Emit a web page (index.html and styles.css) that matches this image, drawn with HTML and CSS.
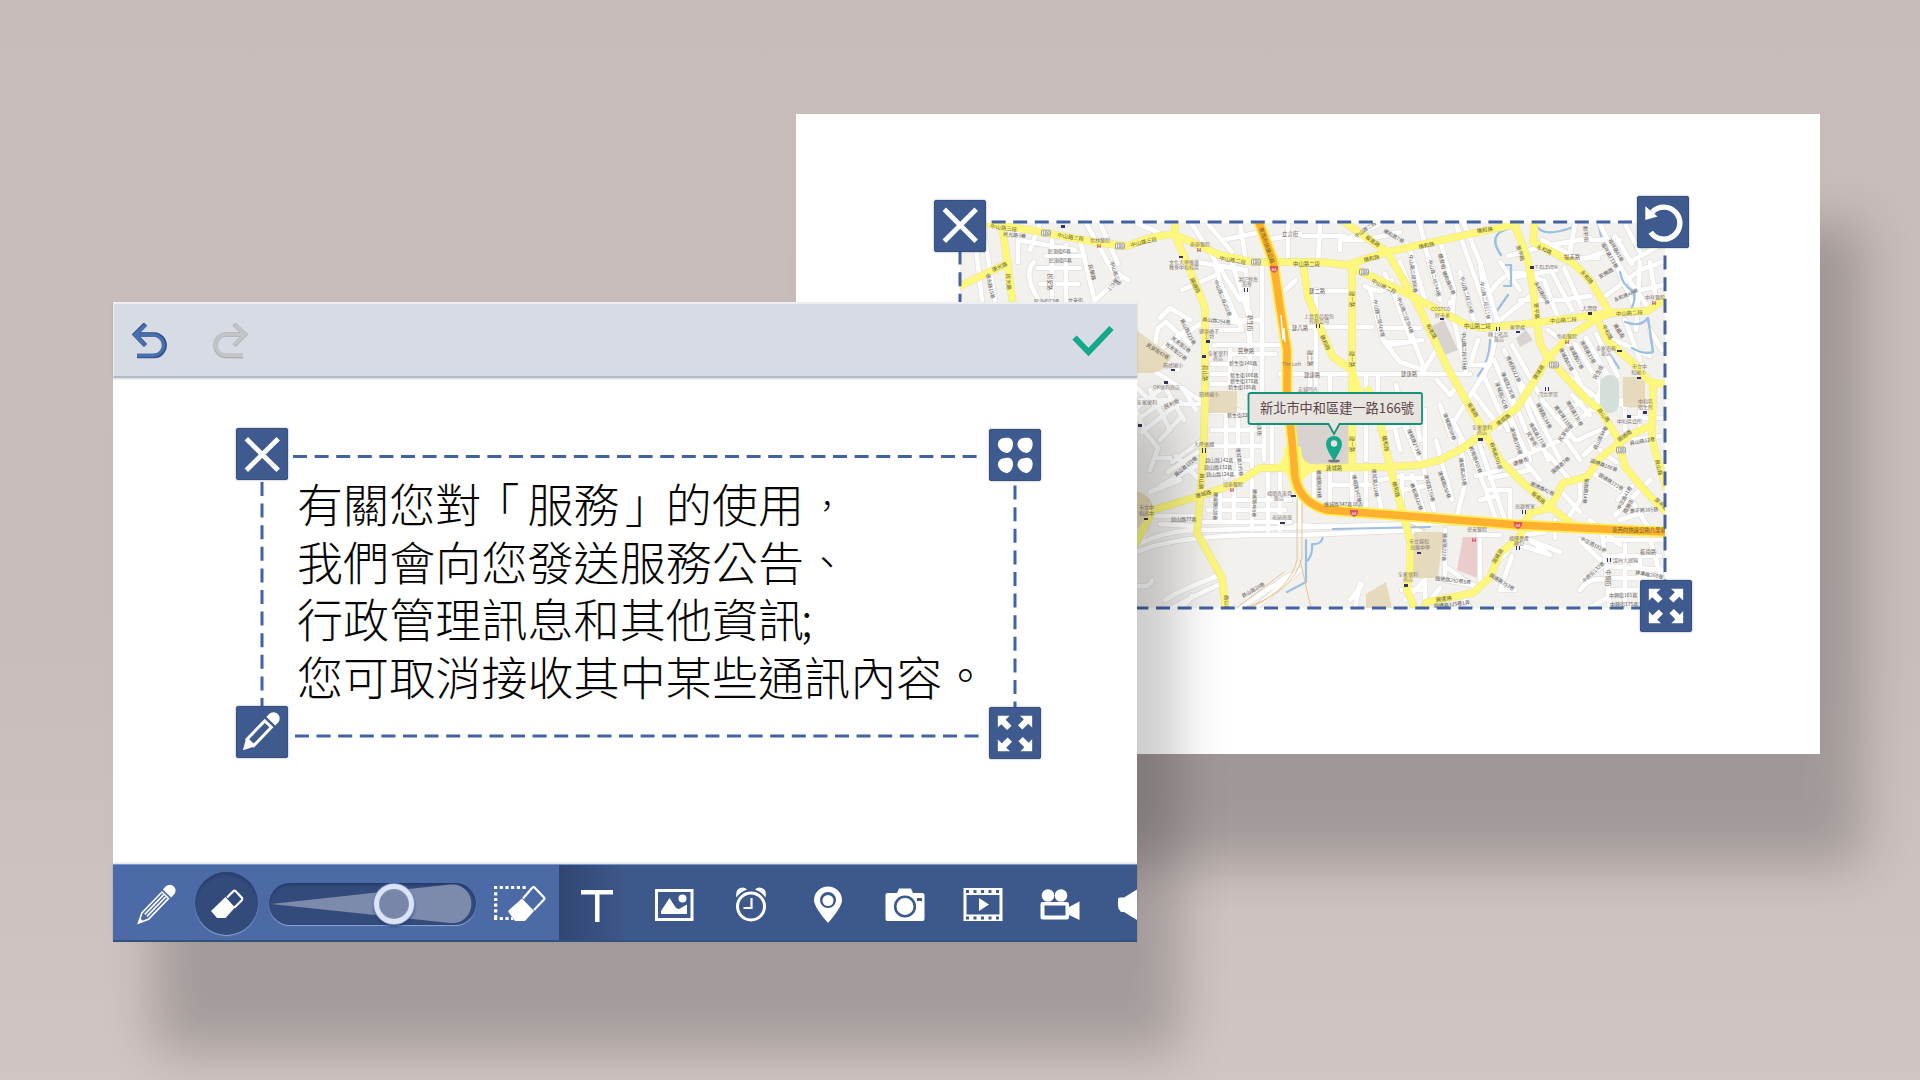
FILE: index.html
```html
<!DOCTYPE html>
<html lang="zh-Hant">
<head>
<meta charset="utf-8">
<title>編輯畫布</title>
<link rel="stylesheet" href="styles.css">
</head>
<body>
<main class="stage">
  <section class="card card-map">
    <svg class="map" viewBox="960 223 705 385" width="705" height="385">
      <defs>
        <g id="streets">
          <path d="M968 223L975 240L982 300M985 240L995 300M1018 226V262M1030 250L1040 223M1034 262Q1022 275 1040 302M1052 240V300M1066 245V300M1080 240L1095 302M1038 268H1080M1040 284H1078M1086 223L1112 270L1128 280M1100 223L1118 264M1095 300L1120 278M1018 240L1075 250M1046 256H1085"/>
          <path d="M1138 224L1158 232M1192 224L1216 262L1240 300M1208 224L1232 252M1240 223L1246 262M1222 240L1262 232M1196 262L1246 270L1250 360M1182 290L1214 276M1190 320L1170 308L1160 318M1176 340L1206 320M1160 350L1186 330M1155 344L1158 328L1166 322L1190 344M1146 366L1200 400M1143 344L1178 370"/>
          <path d="M1216 268L1232 320M1224 290L1242 330M1214 322H1250M1214 345H1280M1218 354H1275M1212 364H1240M1212 374H1240M1212 384H1240M1230 350V400M1250 312V398M1262 262V400M1232 262L1250 320M1240 320H1262M1206 330H1240"/>
          <path d="M1137 420L1165 400M1137 408L1162 388M1142 432L1180 402M1160 440L1182 416M1140 400H1170M1150 390L1170 430M1163 384L1184 420M1137 388L1160 410M1183 388L1196 410M1160 404H1200"/>
          <path d="M1137 412L1145 432L1158 448L1150 470M1158 458H1170M1172 462L1200 442M1168 472L1198 452M1160 486L1196 466M1150 492L1180 480M1176 456L1198 478M1212 412H1258M1212 430H1256M1212 446H1262M1212 460H1250M1212 473H1250M1226 404V478M1238 410V482M1252 404V466M1264 394V460M1272 400V470"/>
          <path d="M1212 500H1290M1208 510H1285M1204 522H1290M1220 490V522M1234 488V522M1252 480V530M1268 474V530M1280 470V530M1155 516H1200M1160 524L1195 526M1148 520L1142 540"/>
          <path d="M1137 545Q1170 528 1210 530L1480 522M1137 552Q1180 533 1300 535L1420 530M1137 586Q1150 588 1152 580M1165 600Q1180 590 1220 575M1172 608Q1190 598 1218 585M1182 608L1192 596M1240 608L1290 575M1255 608L1300 570"/>
          <path d="M1288 224V262M1303 236H1345M1265 240L1300 234M1320 224L1318 262M1340 250V240H1365L1400 232M1345 240L1380 224M1318 291H1350M1285 327H1372M1285 290L1296 280M1316 290V395M1280 374H1470M1330 374V400M1366 374V460M1378 374V395"/>
          <path d="M1365 286Q1385 298 1392 280M1370 290L1383 340L1400 362L1424 370L1436 350M1385 274L1410 330L1424 368M1396 300L1412 342H1384M1400 262L1418 310M1408 244L1425 300M1428 258L1440 300M1420 224L1426 250L1440 290M1440 240L1454 290L1452 320M1456 224L1490 320M1464 224L1480 262L1488 322M1384 328H1420M1390 345L1422 340"/>
          <path d="M1460 272L1474 320M1480 262L1500 330M1450 302L1462 356L1466 370M1495 330Q1495 360 1480 380L1455 420M1478 340L1470 365H1490M1504 350L1530 400M1512 345L1540 395M1494 360L1516 412M1484 376L1508 430M1475 395L1500 428M1464 400L1488 440M1452 420L1474 460"/>
          <path d="M1492 290Q1510 262 1540 280M1500 262L1520 290M1508 256L1545 246L1590 238M1520 300H1560M1510 278L1556 270M1500 320L1530 296M1544 280L1558 318M1552 272L1572 310M1564 268L1582 308M1542 240L1580 260L1610 250M1568 262L1575 224M1580 240H1620M1600 224L1622 270L1650 310M1560 258H1598M1548 330L1575 350M1560 300L1590 296"/>
          <path d="M1615 236L1632 264M1626 226L1640 252M1630 262L1660 245M1600 300L1640 270L1662 262M1618 270L1636 310M1640 262L1636 330M1625 320L1640 360M1614 340L1650 356M1650 330L1662 350M1640 290L1664 285M1656 300L1650 262"/>
          <path d="M1565 352L1586 396M1575 344L1602 388M1586 338L1610 380M1596 334L1618 376M1560 370L1600 400L1560 440M1606 372L1594 410M1572 395L1590 415M1620 400L1652 408M1625 382V430M1640 380V430M1610 405H1652M1628 418H1664"/>
          <path d="M1440 405L1452 440M1425 410V460M1412 395L1420 440M1404 425L1420 462M1436 440L1452 500M1424 470L1434 510M1412 475L1424 512M1402 475V515M1404 478H1426M1460 440L1466 480L1456 520M1470 450L1486 490L1496 520M1478 440L1505 520M1402 490L1425 486M1437 380L1450 395L1458 385"/>
          <path d="M1496 382L1520 440M1506 382L1534 450M1518 382L1548 460M1530 400L1560 460M1542 400L1575 440M1510 420L1530 460M1500 466L1570 436M1520 456L1540 480M1548 454L1570 480M1556 418L1590 396M1490 478L1530 470M1488 490H1510V525M1476 476L1500 470M1480 500L1496 496M1580 460L1566 440"/>
          <path d="M1578 440L1600 430M1584 455L1610 430M1588 470L1620 490M1600 450L1616 462M1580 480V500L1570 515M1560 490L1580 512M1630 440L1660 436M1618 500L1632 486M1615 515L1650 480M1620 520L1665 505M1625 490L1650 530M1602 530L1610 608M1580 540L1600 560M1590 520L1620 545"/>
          <path d="M1445 530V580L1474 585M1448 568L1478 590M1480 540V580M1478 535H1500M1440 588L1430 600M1402 590H1425M1405 600L1425 580V608M1465 600L1470 608M1512 556L1500 590L1515 590M1520 545L1550 555L1530 540L1560 552M1525 535L1545 532M1500 560L1516 540M1555 538V520M1360 583L1355 608M1350 600L1362 585"/>
          <path d="M1606 540H1665M1606 556H1660M1606 566L1665 570M1606 578H1660M1582 580L1602 566M1580 590Q1590 576 1606 580M1590 608L1620 590M1610 590H1664M1625 545V600M1640 556V600M1650 540L1665 590M1620 555L1660 580"/>
          <path d="M1300 480V522M1314 470V500M1330 472V505M1352 472V512M1366 470V510M1374 472L1382 512M1380 480L1400 476M1330 485H1370M1296 525L1420 532M1310 380V393M1388 400L1400 450M1396 385L1408 430M1365 400H1380M1380 430L1400 425"/>
        </g>
        <g id="arterials">
          <path d="M985 223L1030 230L1100 243L1127 246L1153 237L1173 234L1187 240L1220 255L1253 262L1320 262L1347 265L1387 252L1433 242L1516 224"/>
          <path d="M1347 265L1400 290L1467 325L1483 328L1533 323L1610 313L1647 311L1667 298"/>
          <path d="M1343 221L1387 252L1417 303L1447 367L1483 430L1500 460L1523 483L1550 507L1572 524"/>
          <path d="M1352 265V467"/>
          <path d="M1303 263L1308 297L1325 340L1333 357L1352 370M1368 390L1377 407L1390 467L1403 513L1410 540V567L1407 590L1415 610"/>
          <path d="M1175 221V235L1190 270L1205 308V400L1203 460L1197 533L1222 578L1226 610"/>
          <path d="M1135 545L1153 510L1203 495L1237 483L1260 468H1290L1387 467L1420 465L1440 460L1463 448L1490 428L1517 408L1535 380L1547 360L1567 338L1597 318L1612 313"/>
          <path d="M1513 221L1527 257L1533 287L1537 323L1540 343L1548 358L1587 400L1600 410L1617 437L1625 467L1647 493L1667 513"/>
          <path d="M1535 221L1533 242L1573 263L1590 280L1610 313M1597 318L1607 340L1633 363L1650 382L1667 385M1653 383L1652 440L1666 487"/>
          <path d="M1652 425L1630 435L1600 458L1587 477L1563 483L1550 508L1530 513L1523 527L1520 537L1500 553L1490 577L1473 593L1427 602L1423 610"/>
          <path d="M958 287L1008 263M1002 225L1008 267L1013 305"/>
        </g>
        <path id="highway" d="M1258 220L1273 260L1280 307L1287 350V393L1292 440L1295 477Q1300 503 1327 510L1420 517L1517 525L1667 532"/>
      </defs>
      <rect x="960" y="223" width="705" height="385" fill="#f2f1ee"/>
      <path fill="#d9d3cf" d="M1296 420H1349V465H1308Q1296 460 1296 447ZM1432 326L1444 320L1458 350L1442 356ZM1516 338L1526 330L1533 340L1520 347Z"/>
      <g class="water"><path d="M1510 228Q1486 234 1501 255M1506 265H1511V286H1504M1508 295L1494 315M1535 223Q1540 236 1560 231T1573 224M1598 223L1602 240M1620 272Q1622 285 1634 292Q1636 300 1630 312M1625 322Q1640 328 1648 318L1653 352Q1644 355 1632 348M1611 356L1619 368M1323 536Q1322 545 1312 544Q1313 556 1306 562M1306 540V582L1287 592M1490 340Q1490 360 1478 376"/></g>
      <use href="#streets" class="street-edge"/>
      <use href="#streets" class="street"/>
      <g class="water"><path d="M1510 228Q1486 234 1501 255M1506 265H1511V286M1620 272Q1622 285 1634 292Q1636 300 1630 312M1625 322Q1640 328 1648 318L1653 352Q1644 355 1632 348M1333 529L1430 527"/></g>
      <g fill="#e5dabb">
        <path d="M1136 330L1172 356Q1164 372 1152 373H1136Z"/>
        <path d="M1210 391H1237V413H1208ZM1136 491Q1150 494 1153 507L1145 520L1136 530ZM1414 532H1443L1438 578H1412ZM1623 377H1645V407H1623ZM1366 594L1386 582L1392 608H1366Z"/>
      </g>
      <path fill="#ebcccc" d="M1463 537H1477V578L1457 570Z"/>
      <rect x="1600" y="375" width="19" height="38" rx="9" fill="#d3dfd9"/>
      <g class="ramp"><path d="M1297 500V560Q1290 590 1250 608M1302 500V558Q1294 592 1240 610M1300 560L1311 608M1284 572L1234 610M1400 520L1425 530"/></g>
      <use href="#arterials" class="arterial-edge"/>
      <path d="M1275 468Q1288 466 1287 450M1312 468Q1297 464 1298 450M1285 468Q1294 476 1294 488M1314 468Q1300 472 1298 486M1352 370L1360 393" class="arterial"/>
      <use href="#arterials" class="arterial"/>
      <use href="#highway" class="highway-edge"/>
      <use href="#highway" class="highway"/>
      <path d="M1281 315L1283 340L1284 328L1285 342" fill="none" stroke="#fff" stroke-width="1.400"/>
      <g class="label label-road">
        <text x="990" y="228" transform="rotate(8 990 228)">中山路三段</text>
        <text x="1057" y="237" transform="rotate(9 1057 237)">中山路三段</text>
        <text x="1131" y="247" transform="rotate(-13 1131 247)">中山路三段</text>
        <text x="1219" y="260" transform="rotate(10 1219 260)">中山路二段</text>
        <text x="1293" y="266">中山路二段</text>
        <text x="1364" y="262" transform="rotate(-12 1364 262)">橋和路</text>
        <text x="1419" y="249" transform="rotate(-12 1419 249)">橋和路</text>
        <text x="1477" y="233" transform="rotate(-8 1477 233)">橋和路</text>
        <text x="1371" y="282" transform="rotate(27 1371 282)">中山路二段</text>
        <text x="1464" y="328">中山路二段</text>
        <text x="1550" y="323" transform="rotate(-4 1550 323)">中山路二段</text>
        <text x="1616" y="316" transform="rotate(-4 1616 316)">中山路二段</text>
        <text x="1365" y="238" transform="rotate(36 1365 238)">板南路</text>
        <text x="1536" y="248" transform="rotate(25 1536 248)">永和路</text>
        <text x="1580" y="272" transform="rotate(50 1580 272)">永和路</text>
        <text x="1516" y="246" transform="rotate(72 1516 246)">景平路</text>
        <text x="1534" y="303" transform="rotate(86 1534 303)">景平路</text>
        <text x="993" y="272" transform="rotate(-24 993 272)">德光路</text>
        <text x="1006" y="274" transform="rotate(86 1006 274)">民光路</text>
        <text x="1190" y="279" transform="rotate(65 1190 279)">圓通路</text>
        <text x="1203" y="365" transform="rotate(90 1203 365)">員山路</text>
        <text x="1200" y="473" transform="rotate(94 1200 473)">員山路</text>
        <text x="1350" y="291" transform="rotate(90 1350 291)">建一路</text>
        <text x="1350" y="351" transform="rotate(90 1350 351)">建一路</text>
        <text x="1350" y="436" transform="rotate(90 1350 436)">建一路</text>
        <text x="1320" y="336" transform="rotate(66 1320 336)">橋和路</text>
        <text x="1382" y="436" transform="rotate(79 1382 436)">橋和路</text>
        <text x="1392" y="482" transform="rotate(75 1392 482)">橋和路</text>
        <text x="1196" y="498" transform="rotate(-15 1196 498)">連城路</text>
        <text x="1326" y="470">連城路</text>
        <text x="1498" y="426" transform="rotate(-37 1498 426)">連城路</text>
        <text x="1536" y="380" transform="rotate(-58 1536 380)">連城路</text>
        <text x="1426" y="325" transform="rotate(63 1426 325)">板南路</text>
        <text x="1467" y="404" transform="rotate(60 1467 404)">板南路</text>
        <text x="1531" y="494" transform="rotate(40 1531 494)">板南路</text>
        <text x="1597" y="410" transform="rotate(52 1597 410)">員山路</text>
        <text x="1602" y="326" transform="rotate(63 1602 326)">中和路</text>
        <text x="1619" y="442" transform="rotate(-35 1619 442)">圓通路</text>
        <text x="1495" y="564" transform="rotate(-58 1495 564)">圓通路</text>
        <text x="1436" y="602" transform="rotate(-8 1436 602)">圓通路</text>
        <text x="1654" y="500" transform="rotate(44 1654 500)">景平路</text>
        <text x="1655" y="460" transform="rotate(76 1655 460)">員山路</text>
        <text x="1224" y="595" transform="rotate(86 1224 595)">員山路</text>
        <text x="1612" y="532">東西向快速公路八里新店線</text>
        <text x="1259" y="228" transform="rotate(72 1259 228)">東西向快速公路</text>
      </g>
      <g class="label label-minor">
        <text x="1282" y="236">立言街</text><text x="1309" y="293">建二路</text><text x="1292" y="330">建八路</text><text x="1304" y="377">建康路</text><text x="1401" y="376">建康路</text><text x="1238" y="353">民樂路</text>
        <text x="1248" y="315" transform="rotate(90 1248 315)">新生街</text><text x="1308" y="350" transform="rotate(90 1308 350)">建二路</text><text x="1564" y="259">福美路</text><text x="1600" y="279" transform="rotate(-30 1600 279)">安樂路</text>
        <text x="1583" y="226" transform="rotate(85 1583 226)">和平街</text><text x="1613" y="325" transform="rotate(58 1613 325)">廣福路</text><text x="1514" y="466" transform="rotate(-20 1514 466)">建勝街</text><text x="1526" y="433" transform="rotate(60 1526 433)">民安街</text><text x="1561" y="442" transform="rotate(-55 1561 442)">民享街</text>
        <text x="1640" y="554">板南路</text><text x="1606" y="570" transform="rotate(90 1606 570)">中興街</text><text x="1165" y="409" transform="rotate(-24 1165 409)">民利街</text><text x="1048" y="274" transform="rotate(90 1048 274)">民安路</text><text x="1088" y="265" transform="rotate(75 1088 265)">民樂路</text><text x="1438" y="254" transform="rotate(75 1438 254)">橋安街</text><text x="1626" y="514" transform="rotate(-60 1626 514)">南勝街</text><text x="1596" y="380" transform="rotate(-60 1596 380)">民生街</text>
      </g>
      <g class="label label-lane">
        <text x="1003" y="236" transform="rotate(5 1003 236)">民光路5巷</text><text x="1048" y="253">民治街6巷</text><text x="1049" y="262">民治街8巷</text><text x="1034" y="303">民治街23巷</text><text x="1068" y="302">立安街</text>
        <text x="986" y="274" transform="rotate(78 986 274)">德光路15巷</text><text x="1110" y="262" transform="rotate(72 1110 262)">中山路三段</text><text x="1110" y="291" transform="rotate(-50 1110 291)">179巷</text>
        <text x="1202" y="321" transform="rotate(7 1202 321)">員山路294巷</text><text x="1180" y="320" transform="rotate(63 1180 320)">員山路325巷</text><text x="1214" y="281" transform="rotate(68 1214 281)">中山路二段253巷</text>
        <text x="1171" y="339" transform="rotate(38 1171 339)">民安街2巷</text><text x="1165" y="345" transform="rotate(38 1165 345)">民安街22巷</text><text x="1146" y="346" transform="rotate(32 1146 346)">民安街42巷</text>
        <text x="1229" y="365">新生街148巷</text><text x="1230" y="377">新生街166巷</text><text x="1230" y="383">新生街176巷</text><text x="1228" y="389">新生街186巷</text><text x="1227" y="417">新生街220巷</text>
        <text x="1205" y="462">員山路142巷</text><text x="1204" y="469">員山路132巷</text><text x="1206" y="476">員山路124巷</text><text x="1176" y="477" transform="rotate(-40 1176 477)">員山路131巷</text><text x="1171" y="521">員山路77巷</text>
        <text x="1236" y="448" transform="rotate(83 1236 448)">連城路335巷</text><text x="1214" y="492" transform="rotate(92 1214 492)">連城路520巷</text><text x="1253" y="489" transform="rotate(92 1253 489)">連城路469巷</text><text x="1317" y="470" transform="rotate(89 1317 470)">連城路389巷</text><text x="1352" y="475" transform="rotate(78 1352 475)">連城路347巷</text><text x="1372" y="469" transform="rotate(84 1372 469)">連城路319巷</text><text x="1324" y="506">連城路347巷18弄</text><text x="1243" y="598" transform="rotate(-30 1243 598)">員山路36巷</text><text x="1257" y="421" transform="rotate(88 1257 421)">新生街</text>
        <text x="1356" y="238" transform="rotate(-34 1356 238)">中山路二段416巷</text><text x="1383" y="232" transform="rotate(30 1383 232)">橋和路7巷</text><text x="1409" y="255" transform="rotate(83 1409 255)">中山路二段366巷</text><text x="1428" y="260" transform="rotate(76 1428 260)">中山路二段340巷</text><text x="1442" y="272" transform="rotate(66 1442 272)">橋和路90巷</text><text x="1460" y="277" transform="rotate(75 1460 277)">中山路二段328巷</text><text x="1480" y="282" transform="rotate(80 1480 282)">中山路二段311巷</text><text x="1373" y="300" transform="rotate(78 1373 300)">中山路二段406巷</text><text x="1397" y="298" transform="rotate(70 1397 298)">中山路二段384巷</text><text x="1462" y="332" transform="rotate(89 1462 332)">中山路二段318巷</text><text x="1534" y="283" transform="rotate(60 1534 283)">永和路86巷</text>
        <text x="1506" y="357" transform="rotate(65 1506 357)">連城路222巷</text><text x="1501" y="373" transform="rotate(68 1501 373)">連城路236巷</text><text x="1495" y="383" transform="rotate(70 1495 383)">連城路242巷</text><text x="1559" y="349" transform="rotate(63 1559 349)">連城路89巷</text><text x="1569" y="347" transform="rotate(63 1569 347)">連城路57巷</text><text x="1580" y="342" transform="rotate(60 1580 342)">連城路31巷</text>
        <text x="1601" y="244" transform="rotate(60 1601 244)">福祥路113巷</text><text x="1608" y="240" transform="rotate(60 1608 240)">福祥路81巷</text><text x="1615" y="302" transform="rotate(-24 1615 302)">永和路A8巷</text>
        <text x="1443" y="414" transform="rotate(70 1443 414)">連城路268巷</text><text x="1407" y="430" transform="rotate(67 1407 430)">連城路273巷</text><text x="1424" y="475" transform="rotate(75 1424 475)">連城路258巷</text><text x="1438" y="472" transform="rotate(70 1438 472)">連城路250巷</text><text x="1410" y="484" transform="rotate(70 1410 484)">橋和路120巷</text><text x="1469" y="447" transform="rotate(70 1469 447)">板南路455巷</text><text x="1490" y="443" transform="rotate(72 1490 443)">板南路501巷</text><text x="1459" y="458" transform="rotate(82 1459 458)">連城路263巷</text><text x="1510" y="428" transform="rotate(72 1510 428)">連城路199巷</text><text x="1529" y="424" transform="rotate(60 1529 424)">連城路175巷</text><text x="1536" y="404" transform="rotate(63 1536 404)">連城路134巷</text><text x="1554" y="407" transform="rotate(54 1554 407)">連城路118巷</text><text x="1566" y="402" transform="rotate(60 1566 402)">連城路110巷</text><text x="1443" y="533" transform="rotate(92 1443 533)">連城路227巷</text>
        <text x="1553" y="474" transform="rotate(-40 1553 474)">圓通路7巷</text><text x="1530" y="485" transform="rotate(25 1530 485)">圓通路42巷</text><text x="1590" y="462" transform="rotate(20 1590 462)">圓通路186巷</text><text x="1598" y="476" transform="rotate(32 1598 476)">圓通路121巷</text><text x="1585" y="478" transform="rotate(95 1585 478)">板南路14巷</text><text x="1596" y="450" transform="rotate(-62 1596 450)">員山路84巷</text><text x="1630" y="445" transform="rotate(-10 1630 445)">員山路12巷</text><text x="1630" y="513" transform="rotate(-4 1630 513)">景平路385巷</text><text x="1620" y="510" transform="rotate(-62 1620 510)">中正路41巷</text>
        <text x="1435" y="580" transform="rotate(7 1435 580)">圓通路252巷5弄</text><text x="1489" y="576" transform="rotate(32 1489 576)">圓通路257巷</text><text x="1434" y="608" transform="rotate(-6 1434 608)">圓通路325巷1弄</text><text x="1580" y="540" transform="rotate(27 1580 540)">中正路181巷</text><text x="1584" y="583" transform="rotate(-42 1584 583)">中興街132巷</text><text x="1609" y="597">中興街161巷</text><text x="1610" y="606">中興街175巷</text><text x="1635" y="574" transform="rotate(10 1635 574)">建康路260巷</text>
      </g>
      <g class="label label-place">
        <text x="1090" y="242">佑林醫院</text><text x="1190" y="246">泰康醫院</text><text x="1169" y="264">文化大學推廣</text><text x="1169" y="269">教育中和校區</text><text x="1238" y="281">洪記鮮魚</text><text x="1242" y="286">海鮮</text><text x="1199" y="333">健康橋子</text><text x="1204" y="338">工坊</text><text x="1208" y="355">全家便利</text><text x="1213" y="360">商店</text><text x="1163" y="367">積穗國小</text><text x="1153" y="389">OK便利商店</text><text x="1199" y="396">積穗國小</text><text x="1282" y="366">The Loft</text>
        <text x="1304" y="318">上島食品股份</text><text x="1309" y="323">有限公司</text><text x="1431" y="311">COSTCO</text><text x="1435" y="317">好市多</text><text x="1535" y="269">7-ELEVEN</text><text x="1582" y="310">大潤發</text><text x="1510" y="329">家樂福</text><text x="1488" y="336">極上老品</text><text x="1494" y="341">飯店</text><text x="1557" y="338">怡和醫院</text><text x="1645" y="299">中祥醫院</text><text x="1596" y="350">全家商務</text><text x="1601" y="355">旅店</text><text x="1632" y="368">市立中</text><text x="1631" y="374">和國小</text><text x="1298" y="391">宏城時光</text>
        <text x="1194" y="446">大呼過癮</text><text x="1223" y="486">冠泰醫院</text><text x="1267" y="495">福朋喜來登</text><text x="1274" y="500">飯店</text><text x="1272" y="519">老爺商旅</text><text x="1139" y="509">市立中</text><text x="1139" y="515">和高中</text><text x="1137" y="404">全家便利</text><text x="1538" y="396">河北樂堂</text><text x="1472" y="429">全家便利</text><text x="1477" y="434">商店</text><text x="1515" y="508">高雄賓室</text><text x="1638" y="403">中和區</text><text x="1638" y="409">衛生所</text><text x="1617" y="423">中和區公所</text><text x="1467" y="531">使安醫院</text><text x="1409" y="543">市立錦和</text><text x="1410" y="549">高級中學</text><text x="1509" y="540">福樓農產</text><text x="1514" y="545">麵包</text><text x="1398" y="576">全家便利</text><text x="1403" y="581">商店</text><text x="1613" y="562">溫州大餛飩</text>
      </g>
      <g class="hospital"><text x="1097" y="248">H</text><text x="1197" y="252">H</text><text x="1565" y="344">H</text><text x="1652" y="305">H</text><text x="1230" y="492">H</text><text x="1472" y="542">H</text></g>
      <g class="poi"><path d="M1061 225h4v3h-4zM1179 256h4v2h-4zM1206 340h4v3h-4zM1202 355h4v3h-4zM1164 381h4v3h-4zM1171 369h4v2h-4zM1244 288h1v4h-1zM1247 288h1v4h-1zM1316 324h1v4h-1zM1319 324h1v4h-1zM1440 318h4v2h-4zM1530 266h4v3h-4zM1588 312h4v3h-4zM1516 331h4v2h-4zM1496 327h1v4h-1zM1499 327h1v4h-1zM1617 350h5v2h-5zM1637 377h4v2h-4zM1138 424h4v3h-4zM1202 448h1v5h-1zM1205 448h1v5h-1zM1291 495h5v2h-5zM1280 522h5v2h-5zM1144 518h4v2h-4zM1478 438h5v3h-5zM1522 510h1v4h-1zM1525 510h1v4h-1zM1545 387h1v4h-1zM1548 387h1v4h-1zM1516 546h1v4h-1zM1519 546h1v4h-1zM1607 558h1v4h-1zM1610 558h1v4h-1zM1404 584h4v3h-4zM1417 552h4v2h-4zM1643 411h4v3h-4zM1627 415h4v3h-4z"/></g>
      <g class="shield">
        <g transform="translate(1046 233)"><rect x="-4.500" y="-2.800" width="9" height="5.600" rx="1"/><text y="1.700">106</text></g>
        <g transform="translate(1120 246)"><rect x="-4.500" y="-2.800" width="9" height="5.600" rx="1"/><text y="1.700">106</text></g>
        <g transform="translate(1256 262)"><rect x="-4.500" y="-2.800" width="9" height="5.600" rx="1"/><text y="1.700">106</text></g>
        <g transform="translate(1364 272)"><rect x="-4.500" y="-2.800" width="9" height="5.600" rx="1"/><text y="1.700">106</text></g>
        <g transform="translate(1554 365)"><rect x="-4.500" y="-2.800" width="9" height="5.600" rx="1"/><text y="1.700">106</text></g>
        <g transform="translate(1621 450)"><rect x="-4.500" y="-2.800" width="9" height="5.600" rx="1"/><text y="1.700">106</text></g>
      </g>
      <g class="route">
        <g transform="translate(1274 269)"><path d="M-4-3h8q1 5-4 7q-5-2-4-7z"/><text y="1.800">64</text></g>
        <g transform="translate(1354 513)"><path d="M-4-3h8q1 5-4 7q-5-2-4-7z"/><text y="1.800">64</text></g>
        <g transform="translate(1518 525)"><path d="M-4-3h8q1 5-4 7q-5-2-4-7z"/><text y="1.800">64</text></g>
      </g>
      <ellipse cx="1334" cy="461" rx="6" ry="1.600" fill="#777"/>
      <path d="M1334 461Q1326 449 1326 444A8 8 0 0 1 1342 444Q1342 449 1334 461Z" fill="#16a88c"/>
      <circle cx="1334" cy="443.500" r="3.200" fill="#e8e3df"/>
      <path class="callout" d="M1251 393H1420Q1422 393 1422 395V422Q1422 424 1420 424H1339.500L1334 434L1328.500 424H1251Q1248.500 424 1248.500 422V395Q1248.500 393 1251 393Z"/>
      <text class="callout-text" x="1260" y="413" textLength="154">新北市中和區建一路166號</text>
    </svg>
    <svg class="frame" viewBox="0 0 705 386" width="705" height="386">
      <path d="M10 0H705M0 7V386M705 12V386M-20 386H705"/>
    </svg>
    <span class="handle map-nw"><svg viewBox="0 0 53 53"><path d="M10.500 9.500L43 42M43 9.500L10.500 42" class="cross"/></svg></span>
    <span class="handle map-ne"><svg viewBox="0 0 53 53"><path d="M15.500 16.500A16.300 16.300 0 1 1 14 37" class="turn"/><path d="M8.500 10.500V24.500L21 21Z" class="solid"/></svg></span>
    <span class="handle map-se"><svg viewBox="0 0 53 53"><path class="solid" d="M9 9h12l-4 4 6 6-4.500 4.500-6-6L9 21zM44 9v12l-4-4-6 6-4.500-4.500 6-6L31.500 9zM9 44V32l4 4 6-6 4.500 4.500-6 6 4 3.500zM44 44H32l4-4-6-6 4.500-4.500 6 6 3.500-4z"/></svg></span>
  </section>

  <section class="card card-editor">
    <header class="topbar">
      <svg class="history" width="36" height="36" viewBox="0 0 36 36"><g fill="none" stroke="#2c4f8c" stroke-width="4.600"><path d="M13.500 1L3 11.500L13.500 22.500M3 11.500H22A10.500 10.700 0 0 1 22 33H5"/></g><path d="M13.500 1.800L3 12L13.500 22.500M3 12H22A10.500 10.300 0 0 1 22 32.500H5" fill="none" stroke="#4a6fae" stroke-width="3.400"/></svg>
      <svg class="history" width="36" height="36" viewBox="0 0 36 36"><g fill="none" stroke="#a9acaf" stroke-width="4.400"><path d="M22 1L33 11.500L22 22.500M33 11.500H14A10.500 10.700 0 0 0 14 33H31"/></g><path d="M22.500 1L33 11.200L22 21.800M33 11.300H14A10.500 10.500 0 0 0 14 32.300H31" fill="none" stroke="#c2c4c6" stroke-width="3.400"/></svg>
      <svg class="confirm" width="42" height="32" viewBox="0 0 42 32"><path d="M2.500 12.500L16.500 27L39.500 3" fill="none" stroke="#16a88c" stroke-width="6"/></svg>
    </header>
    <div class="canvas">
      <div class="note">
        <svg class="frame" viewBox="0 0 753 280" width="753" height="280">
          <path d="M31 .5H718M0 26V280M753 8V280M33 280H720"/>
        </svg>
        <p class="note-text">有關您對<span class="quote-open">「</span>服務<span class="quote-close">」</span>的使用<span class="comma">，</span><br>我們會向您發送服務公告<span class="pause">、</span><br>行政管理訊息和其他資訊<span class="semicolon">;</span><br>您可取消接收其中某些通訊內容<span class="stop">。</span></p>
        <span class="handle note-nw"><svg viewBox="0 0 53 53"><path d="M10.500 11L43 43M43 11L10.500 43" class="cross"/></svg></span>
        <span class="handle note-ne"><svg viewBox="0 0 53 53"><path id="petal" class="solid" d="M17 9C22 8 24.500 11 24.500 15C24.500 20 22 24 18 24.500C13 23.500 9.500 20 9 16C9.500 11 12 9.500 17 9Z"/><use href="#petal" x="20"/><use href="#petal" y="20.500"/><use href="#petal" x="20" y="20.500"/></svg></span>
        <span class="handle note-sw"><svg viewBox="0 0 53 53"><g transform="translate(7 45) rotate(-46)"><path class="solid" d="M0 0L11-6V6Z"/><path d="M11-4.700H37V4.700H11Z" fill="none" stroke="#fff" stroke-width="3"/><path class="solid" d="M41-6.300H45A6.300 6.300 0 0 1 45 6.300H41Z"/></g></svg></span>
        <span class="handle note-se"><svg viewBox="0 0 53 53"><path class="solid" d="M9 9h12l-4 4 6 6-4.500 4.500-6-6L9 21zM44 9v12l-4-4-6 6-4.500-4.500 6-6L31.500 9zM9 45V33l4 4 6-6 4.500 4.500-6 6 4 3.500zM44 45H32l4-4-6-6 4.500-4.500 6 6 3.500-4z"/></svg></span>
      </div>
    </div>
    <footer class="toolbar">
      <div class="draw-tools">
        <svg width="42" height="42" viewBox="0 0 42 42"><g transform="translate(.5 41) rotate(-46)"><path d="M1.500 0L11-4.600H40V4.600H11ZM12-1.500H39M12 1.500H39" fill="none" stroke="#fff" stroke-width="1.600"/><path fill="#fff" d="M42.500-5.800H46.500A5.800 5.800 0 0 1 46.500 5.800H42.500ZM0 0L6-2.800V2.800Z"/></g></svg>
        <span class="tool-active"><svg width="34" height="32" viewBox="0 0 34 32"><path d="M17 9.500L23.500 3Q24.500 2 25.500 3L32 10Q32.500 11 32 12L24.500 19.500" fill="none" stroke="#fff" stroke-width="2.200"/><path fill="#fff" d="M15.500 9L25 19.500L15.500 30H7L1 23Z"/></svg></span>
        <span class="slider"><svg width="207" height="42" viewBox="0 0 207 42"><path d="M2 21L181 1.500H186A19.500 19.500 0 0 1 186 40H181Z" fill="#7c8aab"/></svg><i class="thumb"></i></span>
        <svg class="area-erase" width="52" height="38" viewBox="0 0 52 38"><path d="M0 2.500H34M0 33.500H20M1.700 7.200V33" fill="none" stroke="#fff" stroke-width="3.200" stroke-dasharray="3.200 2.500"/><path d="M15 24L38.500 1Q40 0 41 1.500L51 12.500L30 36H20Z" fill="#4c6ba6"/><path d="M29 13.500L38 3Q39.500 1 41 3L50 12.500Q51 13.500 50 14.500L40 25" fill="none" stroke="#fff" stroke-width="2.200"/><path fill="#fff" d="M28 13.500L40 26L31 36H21L14.500 27Q14 26 15 25Z"/></svg>
      </div>
      <div class="insert-tools">
        <svg viewBox="0 0 40 40"><path fill="#fff" d="M4 7H36V11.500H22.500V39H18V11.500H4Z"/></svg>
        <svg viewBox="0 0 40 40"><path fill="none" stroke="#fff" stroke-width="3" d="M2.500 7.500H38V36.500H2.500Z"/><path fill="#fff" d="M7 31V28L15.500 15L22 25L25 26L33 21.500V31Z"/><circle cx="28.500" cy="15.500" r="4" fill="#fff"/></svg>
        <svg viewBox="0 0 40 40"><circle cx="20" cy="23.500" r="13.500" fill="none" stroke="#fff" stroke-width="3"/><path d="M20.500 15V25H12.500" fill="none" stroke="#fff" stroke-width="2.200"/><path fill="#fff" d="M5.500 14.500Q3.500 5 12 4.500Q15 5 16 6.500Q9 9 5.500 14.500ZM34.500 14.500Q36.500 5 28 4.500Q25 5 24 6.500Q31 9 34.500 14.500Z"/></svg>
        <svg viewBox="0 0 40 40"><path fill="#fff" fill-rule="evenodd" d="M20 40Q6 24 6 17A14 13.500 0 0 1 34 17Q34 24 20 40ZM20 9A8 8 0 1 0 20 25A8 8 0 1 0 20 9Z"/><circle cx="20" cy="17.500" r="5.500" fill="#fff"/></svg>
        <svg viewBox="0 0 40 40"><path fill="#fff" d="M2.500 10H12L14 5.500H26L28 10H37.500Q39.500 10 39.500 12V36Q39.500 38 37.500 38H2.500Q.5 38 .5 36V12Q.5 10 2.500 10Z"/><circle cx="20" cy="23.500" r="9.800" fill="none" stroke="#3d588a" stroke-width="2.600"/><path fill="#3d588a" d="M32 15h5v3h-5z"/></svg>
        <svg viewBox="0 0 40 40"><path fill="#fff" fill-rule="evenodd" d="M.5 5H39.500V38H.5ZM3.500 12V31.500H36.500V12Z"/><path d="M3 8.500H38M3 35H38" stroke="#3d588a" stroke-width="3" stroke-dasharray="3 4.500"/><path fill="#fff" d="M16 15L26 21.500L16 28Z"/></svg>
        <svg viewBox="0 0 40 40"><circle cx="8" cy="12.500" r="6.300" fill="#fff"/><circle cx="21" cy="12.500" r="6.300" fill="#fff"/><path fill="#fff" fill-rule="evenodd" d="M2.500 19H27Q29 19 29 21V24L39.500 18.500V37L29 32V34.500Q29 36.500 27 36.500H2.500Q.5 36.500 .5 34.500V21Q.5 19 2.500 19ZM4.500 22.500V32.500H25.500V22.500Z"/></svg>
        <svg viewBox="0 0 40 40"><path fill="#fff" d="M1 16Q1 14.500 3 14.500H7L40-6V49L7 29H4Q1 26 1 23Z"/></svg>
      </div>
    </footer>
  </section>
</main>
</body>
</html>
```
FILE: styles.css
```css
* { box-sizing: border-box; }
body {
  margin: 0;
  font-family: "Noto Sans CJK TC", "Noto Sans", sans-serif;
}
.stage {
  position: relative;
  width: 1920px;
  height: 1080px;
  overflow: hidden;
  background: linear-gradient(#c7bcba, #c7bdbb 60%, #cfc5c3);
}
.card {
  position: absolute;
  width: 1024px;
  height: 640px;
  background: #fff;
  box-shadow: 42px 110px 48px rgba(0, 0, 0, .2);
}
.card-map { left: 796px; top: 114px; }
.card-editor {
  left: 113px;
  top: 302px;
  display: flex;
  flex-direction: column;
}

.map { display: block; margin: 109px 0 0 164px; }
.card-map .frame { position: absolute; left: 164px; top: 108px; }
.frame path {
  fill: none;
  stroke: #4263a3;
  stroke-width: 3;
  stroke-dasharray: 14 7.600;
}
.frame { display: block; overflow: visible; }

.street, .street-edge, .arterial, .arterial-edge, .highway, .highway-edge, .water, .ramp {
  fill: none;
  stroke-linecap: round;
  stroke-linejoin: round;
}
.street-edge { stroke: #e2dfdc; stroke-width: 6; }
.street { stroke: #fff; stroke-width: 4.600; }
.arterial-edge { stroke: #eee4a0; stroke-width: 7.800; }
.arterial { stroke: #fdf87c; stroke-width: 6.600; }
.highway-edge { stroke: #fbee57; stroke-width: 11; }
.highway { stroke: #ffb02e; stroke-width: 7.500; }
.water { stroke: #9cc0e2; stroke-width: 2.200; }
.ramp { stroke: #e9be84; stroke-width: .9; }
.label-road { font-size: 5.400px; fill: #6a6228; }
.label-minor { font-size: 5.400px; fill: #6b5650; }
.label-lane { font-size: 5px; fill: #5a5858; }
.label-place { font-size: 5px; fill: #867876; }
.hospital { font: bold 5.500px "Liberation Sans", sans-serif; fill: #c22b3e; }
.poi { fill: #34355f; }
.shield rect { fill: #fff; stroke: #777; stroke-width: .7; }
.shield text { font-size: 4.500px; text-anchor: middle; fill: #333; }
.route path { fill: #dc5360; }
.route text { font-size: 4px; text-anchor: middle; fill: #fff; }
.callout { fill: #e8e4df; stroke: #14917b; stroke-width: 1.800; }
.callout-text { font-size: 13.200px; fill: #5b454a; }

.handle {
  position: absolute;
  width: 52px;
  height: 52px;
  border: 1px solid #36507f;
  border-radius: 2px;
  background: #3e5a8e;
  box-shadow: 0 0 2px rgba(60, 50, 40, .5);
}
.handle svg { display: block; width: 52px; height: 52px; margin: -1px; }
.cross, .turn { fill: none; stroke: #fff; stroke-width: 5; }
.turn { stroke-width: 5.500; }
.solid { fill: #fff; }
.map-nw { left: 138px; top: 86px; }
.map-ne { left: 841px; top: 82px; }
.map-se { left: 844px; top: 466px; }

.topbar {
  height: 76px;
  flex: none;
  display: flex;
  align-items: center;
  gap: 44px;
  padding: 1px 23px 0 18px;
  background: #d7dbe3;
  border: solid #eceef2;
  border-width: 2px 0 0 1px;
  border-bottom: 2px solid #b1b8c9;
  box-shadow: 0 1px 2px rgba(0, 0, 0, .18);
}
.confirm { margin-left: auto; }

.canvas { flex: 1; padding: 78px 0 0 149px; }
.note { position: relative; width: 753px; height: 280px; }
.note .frame { position: absolute; left: 0; top: 0; }
.note-text {
  margin: 0;
  padding: 18px 0 0 35px;
  font-size: 46px;
  font-weight: 300;
  line-height: 57.500px;
  letter-spacing: .1px;
  white-space: nowrap;
  color: #050505;
}
.quote-open { margin: 0 8px 0 -8px; }
.quote-close { margin: 0 -5px 0 5px; }
.comma, .stop, .pause {
  display: inline-block;
  width: 46px;
  text-align: center;
  line-height: 1;
}
.comma { font-size: 32px; vertical-align: 4px; }
.stop { font-size: 43px; vertical-align: 3px; }
.pause { font-size: 40px; vertical-align: 3px; }
.semicolon { margin-left: -3px; }
.note-nw { left: -26px; top: -28px; }
.note-ne { left: 727px; top: -27px; }
.note-sw { left: -26px; top: 250px; }
.note-se { left: 727px; top: 251px; }

.toolbar {
  height: 78px;
  flex: none;
  display: flex;
  overflow: hidden;
  border-top: 1px solid #7798cf;
  border-bottom: 2px solid #34507f;
  box-shadow: 0 -1px 2px rgba(0, 0, 0, .15);
}
.draw-tools {
  width: 445.500px;
  flex: none;
  display: flex;
  align-items: center;
  padding: 2px 0 0 24px;
  background: #4c6ba6;
}
.tool-active {
  display: flex;
  align-items: center;
  justify-content: center;
  width: 63px;
  height: 63px;
  margin-left: 16px;
  border-radius: 50%;
  background: #334b7b;
  box-shadow: inset 0 3px 2px #2a4070, 0 1px 1px #8fa7d4;
}
.slider {
  position: relative;
  width: 207px;
  height: 42px;
  margin-left: 11px;
  border-radius: 21px;
  background: #334b7b;
  box-shadow: inset 0 2px 2px #253c6b, 0 1px 1px #8fa7d4;
}
.slider svg { display: block; }
.thumb {
  position: absolute;
  left: 105px;
  top: 1px;
  width: 40px;
  height: 40px;
  border: 5px solid #dbe3f4;
  border-radius: 50%;
  background: #7887a8;
  box-shadow: inset 0 0 0 1px #8293bb, 0 0 0 1px #6f8fce, 0 2px 3px #20355f;
}
.area-erase { margin-left: 18px; }
.insert-tools {
  flex: none;
  display: grid;
  grid-template-columns: repeat(8, 77.100px);
  align-items: center;
  justify-items: center;
  background: linear-gradient(90deg, #304673, #3d588a 66px);
}
.insert-tools svg { width: 40px; height: 40px; overflow: visible; }
```
